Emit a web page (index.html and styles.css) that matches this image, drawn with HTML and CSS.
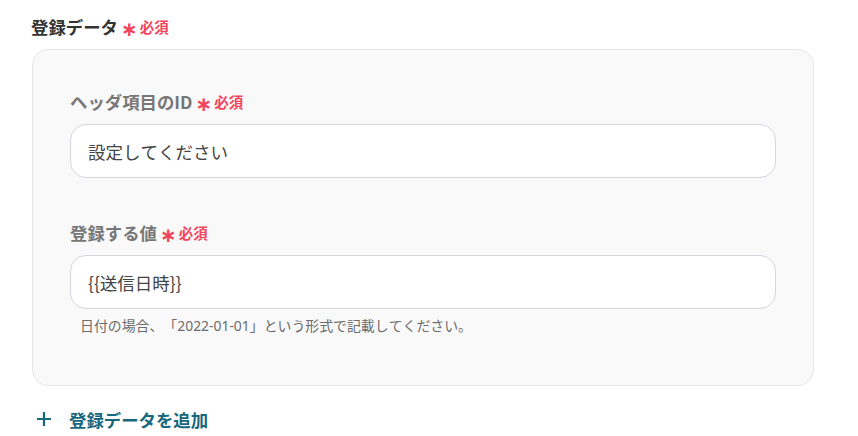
FILE: index.html
```html
<!DOCTYPE html>
<html lang="ja">
<head>
<meta charset="utf-8">
<link rel="stylesheet" href="styles.css">
</head>
<body>
<div class="page">
  <div class="title">登録データ<span class="req"><span class="ast">∗</span>必須</span></div>
  <div class="card">
    <div class="field">
      <div class="label">ヘッダ項目のID<span class="req"><span class="ast">∗</span>必須</span></div>
      <div class="input placeholder">設定してください</div>
    </div>
    <div class="field second">
      <div class="label">登録する値<span class="req"><span class="ast">∗</span>必須</span></div>
      <div class="input">{{送信日時}}</div>
      <div class="help">日付の場合、「2022-01-01」という形式で記載してください。</div>
    </div>
  </div>
  <div class="add">
    <svg class="plus" width="16" height="16" viewBox="0 0 16 16"><path d="M8 1v14M1 8h14" stroke="currentColor" stroke-width="2.2" fill="none"/></svg>
    <span>登録データを追加</span>
  </div>
</div>
</body>
</html>
```
FILE: styles.css
```css
* { box-sizing: border-box; }
body {
  margin: 0;
  background: #fff;
  font-family: "Noto Sans CJK JP", "Noto Sans", sans-serif;
  font-kerning: none;
  text-spacing-trim: space-all;
}
.page {
  padding: 15px 0 0 31px;
  width: 814px;
  display: flex;
  flex-direction: column;
}
.title {
  font-size: 17.4px;
  font-weight: 700;
  line-height: 24px;
  color: #333;
  display: flex;
  align-items: center;
}
.req {
  display: inline-flex;
  align-items: center;
  color: #f2455c;
  font-size: 14.5px;
  font-weight: 700;
  margin-left: 3px;
}
.ast {
  font-family: "DejaVu Sans", sans-serif;
  font-size: 20px;
  font-weight: 700;
  line-height: 1;
  margin-right: 2px;
  position: relative;
  top: 2px;
}
.card {
  margin-top: 10px;
  margin-left: 1px;
  border: 1px solid #e6e6e6;
  border-radius: 16px;
  background: #f9f9f9;
  padding: 40px 37px 50px 37px;
  display: flex;
  flex-direction: column;
}
.field {
  display: flex;
  flex-direction: column;
}
.field.second {
  margin-top: 43px;
}
.label {
  font-size: 17.4px;
  font-weight: 700;
  line-height: 24px;
  color: #777;
  display: flex;
  align-items: center;
}
.input {
  margin-top: 10px;
  height: 54px;
  border: 1px solid #d4d6de;
  border-radius: 16px;
  background: #fff;
  padding: 0 17px;
  display: flex;
  align-items: center;
  font-size: 17.5px;
  color: #444;
}
.help {
  margin-top: 8px;
  margin-left: 10px;
  font-family: "Noto Sans", "Noto Sans CJK JP", sans-serif;
  font-size: 13.9px;
  line-height: 18px;
  color: #6b6b6b;
}
.add {
  margin-top: 21px;
  display: flex;
  align-items: center;
  height: 24px;
  color: #17687c;
  font-size: 17.4px;
  font-weight: 700;
}
.plus {
  margin-left: 5px;
  margin-right: 17px;
}
```
